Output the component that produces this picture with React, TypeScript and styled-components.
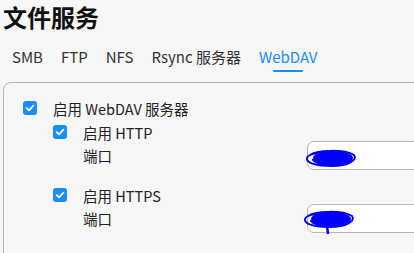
import * as React from 'react';
import styled, { createGlobalStyle } from 'styled-components';

const Global = createGlobalStyle`
  html, body {
    margin: 0;
    padding: 0;
    background: #f6f6f6;
    overflow: hidden;
  }
  body {
    font-family: 'Noto Sans CJK SC', 'Noto Sans', sans-serif;
    color: #222;
  }
`;

const Page = styled.div`
  padding: 0 0 0 3px;
  width: 560px;
  height: 253px;
  overflow: hidden;
`;
const Title = styled.h1`
  margin: 0;
  font-size: 24px;
  font-weight: 700;
  line-height: 34px;
  color: #111;
`;
const Tabs = styled.div`
  display: flex;
  margin-top: 7px;
  height: 41px;
`;
const Tab = styled.div<{ $active?: boolean }>`
  position: relative;
  padding: 0 9px;
  font-size: 15px;
  line-height: 32px;
  color: ${({ $active }) => ($active ? '#1a8cff' : '#333')};

  &::after {
    content: '';
    display: ${({ $active }) => ($active ? 'block' : 'none')};
    position: absolute;
    left: 50%;
    bottom: 10px;
    width: 30px;
    height: 2px;
    margin-left: -15px;
    border-radius: 1px;
    background: #1a8cff;
  }
`;
const Panel = styled.div`
  border: 1px solid #b5b5b5;
  border-radius: 8px;
  padding: 14px 0 40px 19px;
  font-size: 14.5px;
`;
const CheckRow = styled.label`
  display: flex;
  align-items: center;
  gap: 16px;
  height: 22px;
`;
const Box = styled.span`
  width: 14px;
  height: 14px;
  border-radius: 3px;
  background: #1a8cff;
  display: flex;
  align-items: center;
  justify-content: center;
`;
const Nested = styled.div`
  margin-left: 30px;
  margin-top: 2px;
`;
const Group = styled.div`
  & + & {
    margin-top: 14px;
  }
`;
const PortRow = styled.div`
  display: grid;
  grid-template-columns: 224px 1fr;
  align-items: center;
  height: 29px;
  margin-top: -2px;
  margin-left: 30px;
`;
const InputWrap = styled.div`
  position: relative;
  height: 29px;
  box-sizing: border-box;
  border: 1px solid #b5b5b5;
  border-radius: 7px;
  background: #fff;
`;
const Scribble = styled.svg<{ $x: number; $y: number }>`
  position: absolute;
  left: ${({ $x }) => $x}px;
  top: ${({ $y }) => $y}px;
`;

function Check({ label }: { label: string }) {
  return (
    <CheckRow>
      <Box>
        <svg width='10' height='10' viewBox='0 0 10 10'>
          <path d='M1.6 5.2 L4 7.4 L8.4 2.6' fill='none' stroke='#fff' strokeWidth='1.8' strokeLinecap='round' strokeLinejoin='round' />
        </svg>
      </Box>
      <span>{label}</span>
    </CheckRow>
  );
}

function Port({ x, y, tail }: { x: number; y: number; tail?: boolean }) {
  return (
    <PortRow>
      <span>端口</span>
      <InputWrap>
        <Scribble $x={x} $y={y} width='54' height='32' viewBox='0 0 54 32'>
          <ellipse cx='29' cy='11' rx='20' ry='7.5' fill='#0000ff' />
          <path d='M6 8 C12 3 40 2 50 8 C54 13 44 19 28 19 C12 19 2 16 3 11 C4 6 20 5 36 7 C48 9 49 15 38 17 C24 19 8 16 9 12' fill='none' stroke='#0000ff' strokeWidth='2' />
          {tail ? <path d='M25 17 L26 26' stroke='#0000ff' strokeWidth='2.5' /> : null}
        </Scribble>
      </InputWrap>
    </PortRow>
  );
}

export default function App() {
  const tabs = ['SMB', 'FTP', 'NFS', 'Rsync 服务器', 'WebDAV'];

  return (
    <Page>
      <Global />
      <Title>文件服务</Title>
      <Tabs>
        {tabs.map((t) => <Tab key={t} $active={t === 'WebDAV'}>{t}</Tab>)}
      </Tabs>
      <Panel>
        <Check label='启用 WebDAV 服务器' />
        <Nested>
          <Group>
            <Check label='启用 HTTP' />
            <Port x={-4} y={5} />
          </Group>
          <Group>
            <Check label='启用 HTTPS' />
            <Port x={-6} y={3} tail />
          </Group>
        </Nested>
      </Panel>
    </Page>
  );
}
